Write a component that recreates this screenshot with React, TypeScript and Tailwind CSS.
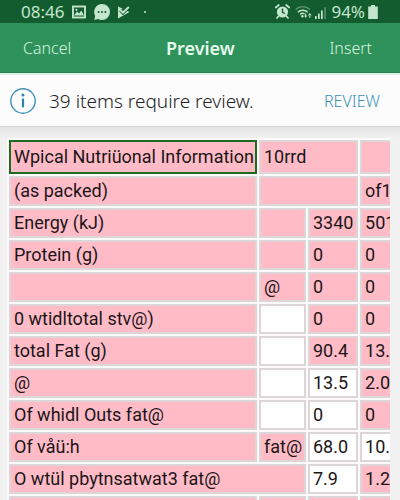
import clsx from 'clsx'

type Cell = {
  text?: string
  span?: number
  ok?: boolean
  selected?: boolean
}

const rows: Cell[][] = [
  [{ text: 'Wpical Nutriüonal Information', selected: true }, { text: '10rrd', span: 2 }, {}],
  [{ text: '(as packed)' }, { span: 2 }, { text: 'of1' }],
  [{ text: 'Energy (kJ)' }, {}, { text: '3340' }, { text: '501' }],
  [{ text: 'Protein (g)' }, {}, { text: '0' }, { text: '0' }],
  [{}, { text: '@' }, { text: '0' }, { text: '0' }],
  [{ text: '0 wtidltotal stv@)' }, { ok: true }, { text: '0' }, { text: '0' }],
  [{ text: 'total Fat (g)' }, { ok: true }, { text: '90.4' }, { text: '13.' }],
  [{ text: '@' }, { ok: true }, { text: '13.5', ok: true }, { text: '2.0' }],
  [{ text: 'Of whidl Outs fat@' }, { ok: true }, { text: '0', ok: true }, { text: '0' }],
  [{ text: 'Of våü:h' }, { text: 'fat@' }, { text: '68.0', ok: true }, { text: '10.', ok: true }],
  [{ text: 'O wtül pbytnsatwat3 fat@', span: 2 }, { text: '7.9', ok: true }, { text: '1.2' }],
  [{}, {}, {}, {}],
]

const StatusBar = () => {
  return (
    <div className="h-[23px] shrink-0 bg-[#125c2f] text-[#c4e6cd] flex items-center justify-between pl-[21px] pr-[22px] text-[17px] leading-5">
      <div className="flex items-center gap-2">
        <span>08:46</span>
        <svg className="w-[14px] h-[14px]" viewBox="0 0 14 14" fill="none">
          <rect x="1" y="1.5" width="12" height="11" stroke="currentColor" strokeWidth="1.9" />
          <path d="M2 10.5 5 6.5l2 2 2.4-3L12 10.5Z" fill="currentColor" />
          <circle cx="4.4" cy="4.8" r="1.1" fill="currentColor" />
        </svg>
        <svg className="w-4 h-4" viewBox="0 0 16 16">
          <path d="M8 0a8 8 0 0 1 0 16c-1.4 0-2.7-.3-3.8-1L.3 16l.9-4A8 8 0 0 1 8 0Z" fill="currentColor" />
          <circle cx="4.6" cy="8" r="1" fill="#125c2f" />
          <circle cx="8" cy="8" r="1" fill="#125c2f" />
          <circle cx="11.4" cy="8" r="1" fill="#125c2f" />
        </svg>
        <svg className="w-3 h-[14px]" viewBox="0 0 12 14" fill="none">
          <path d="M0 1.5 11.5 7 0 13.5Z" fill="currentColor" />
          <path d="M2.6 4.8 5 7.4 11 1.8" stroke="#125c2f" strokeWidth="4" />
          <path d="M2.2 4.8 5 7.6 10.8 2" stroke="currentColor" strokeWidth="2" />
        </svg>
        <span className="w-[2px] h-[2px] ml-[6px] rounded-full bg-current" />
      </div>
      <div className="flex items-center gap-[5px]">
        <svg className="w-[15px] h-[15px]" viewBox="0 0 15 15" fill="none">
          <path d="M.8 3.5 3.8 1M14.2 3.5 11.2 1M3.2 12.5 2 14M11.8 12.5 13 14" stroke="currentColor" strokeWidth="1.7" strokeLinecap="round" />
          <circle cx="7.5" cy="8" r="5.6" fill="currentColor" />
          <path d="M7.5 4.5v3.8l2.3 1.2" stroke="#125c2f" strokeWidth="1.4" />
        </svg>
        <svg className="w-[17px] h-[14px]" viewBox="0 0 17 14" fill="none">
          <path d="M.5 4.5a10.5 10.5 0 0 1 14.5 0" stroke="currentColor" strokeWidth="1.3" opacity=".45" />
          <path d="M2.8 7.2a7.3 7.3 0 0 1 10 0M5.2 9.5a3.8 3.8 0 0 1 4.4-.7" stroke="currentColor" strokeWidth="1.5" />
          <path d="M9.2 10.5h3L10.7 13ZM13 10.5h3.6L14.8 8ZM10.2 8.5h1v2.5h-1ZM14.3 10h1v3h-1Z" fill="currentColor" />
          <circle cx="7.4" cy="11.2" r="1.2" fill="currentColor" />
        </svg>
        <svg className="w-[11px] h-[14px] -ml-[2px]" viewBox="0 0 11 14" fill="currentColor">
          <path d="M0 11h1.7v3H0ZM3 8.5h1.7V14H3ZM6 5.5h1.7V14H6Z" />
          <path d="M9.2 2h1.6v12H9.2Z" opacity=".4" />
        </svg>
        <div className="flex items-center gap-[3px]">
          <span>94%</span>
          <svg className="w-[10px] h-[14px]" viewBox="0 0 10 14" fill="currentColor">
            <path d="M3 0h4v1.5h2.8V14H.2V1.5H3Z" />
          </svg>
        </div>
      </div>
    </div>
  )
}

const Header = () => {
  return (
    <header className="h-[50px] shrink-0 bg-[#2f915b] border-b border-b-[#26804e] text-[#d3f5df] flex items-center justify-between pl-[23px] pr-7">
      <button className="text-base font-light">Cancel</button>
      <h1 className="text-lg font-semibold text-[#e4fbeb]">Preview</h1>
      <button className="text-base font-light">Insert</button>
    </header>
  )
}

const ReviewBar = () => {
  return (
    <div className="h-[54px] shrink-0 bg-[#fcfcfd] border-t-2 border-t-[#d9f3e3] border-b border-b-[#d6d6d6] flex items-center justify-between pl-[10px] pr-5">
      <div className="flex items-center gap-[13px]">
        <svg className="w-[26px] h-[26px]" viewBox="0 0 26 26" fill="none">
          <circle cx="13" cy="13" r="12.2" stroke="#3f8fb8" strokeWidth="1.4" />
          <path d="M13 10.5v8.8" stroke="#2b83b3" strokeWidth="2.2" />
          <circle cx="13" cy="7" r="1.5" fill="#2b83b3" />
        </svg>
        <p className="text-[19px] leading-6 font-light text-[#222]">39 items require review.</p>
      </div>
      <button className="text-base text-[#3d93b4] font-light">REVIEW</button>
    </div>
  )
}

const Sheet = () => {
  return (
    <main className="flex-1 min-h-0 overflow-hidden bg-linear-to-b from-[#e4e4e5] to-[#f1f1f2] to-3% pt-[11px] pl-[7px] pr-[10px]">
      <div className="overflow-hidden">
        <table className="table-fixed w-[430px] border-separate border-spacing-[2px] bg-[#fbf9fa] font-['Roboto',sans-serif] text-lg leading-6 text-[#1c1517]">
          <colgroup>
            <col className="w-[248px]" />
            <col className="w-[47px]" />
            <col className="w-[50px]" />
            <col />
          </colgroup>
          <tbody>
            {rows.map((row, i) => (
              <tr key={i} className={i === 0 ? 'h-[34px]' : 'h-[30px]'}>
                {row.map((cell, j) => (
                  <td
                    key={j}
                    colSpan={cell.span}
                    className={clsx(
                      'border-2 px-[3px] py-0 whitespace-nowrap',
                      cell.selected ? 'border-[#1d6b1d]' : 'border-[#dcd6d8]',
                      cell.ok ? 'bg-white' : 'bg-[#ffbcc7]',
                    )}
                  >
                    {cell.text}
                  </td>
                ))}
              </tr>
            ))}
          </tbody>
        </table>
      </div>
    </main>
  )
}

export default function App() {
  return (
    <div className="h-screen flex flex-col overflow-hidden bg-[#f1f1f2] font-['Noto_Sans',sans-serif]">
      <StatusBar />
      <Header />
      <ReviewBar />
      <Sheet />
    </div>
  )
}
